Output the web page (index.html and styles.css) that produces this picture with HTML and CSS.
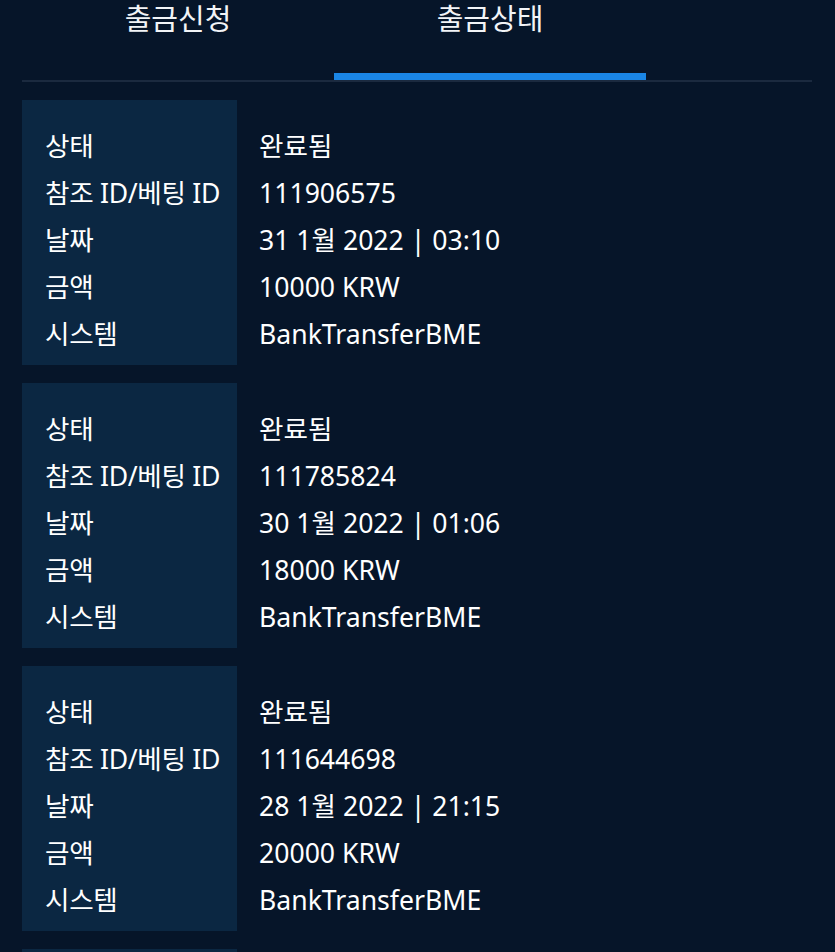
FILE: index.html
```html
<!DOCTYPE html>
<html lang="ko">
<head>
    <meta charset="UTF-8">
    <meta name="viewport" content="width=device-width, initial-scale=1.0">
    <title>출금상태</title>
    <link rel="stylesheet" href="styles.css">
</head>
<body>
    <div class="page">
        <div class="tabs">
            <div class="tab">출금신청</div>
            <div class="tab active">출금상태</div>
        </div>

        <div class="card">
            <div class="labels">
                <div class="row">상태</div>
                <div class="row">참조 ID/베팅 ID</div>
                <div class="row">날짜</div>
                <div class="row">금액</div>
                <div class="row">시스템</div>
            </div>
            <div class="values">
                <div class="row">완료됨</div>
                <div class="row">111906575</div>
                <div class="row">31 1월 2022 | 03:10</div>
                <div class="row">10000 KRW</div>
                <div class="row">BankTransferBME</div>
            </div>
        </div>

        <div class="card">
            <div class="labels">
                <div class="row">상태</div>
                <div class="row">참조 ID/베팅 ID</div>
                <div class="row">날짜</div>
                <div class="row">금액</div>
                <div class="row">시스템</div>
            </div>
            <div class="values">
                <div class="row">완료됨</div>
                <div class="row">111785824</div>
                <div class="row">30 1월 2022 | 01:06</div>
                <div class="row">18000 KRW</div>
                <div class="row">BankTransferBME</div>
            </div>
        </div>

        <div class="card">
            <div class="labels">
                <div class="row">상태</div>
                <div class="row">참조 ID/베팅 ID</div>
                <div class="row">날짜</div>
                <div class="row">금액</div>
                <div class="row">시스템</div>
            </div>
            <div class="values">
                <div class="row">완료됨</div>
                <div class="row">111644698</div>
                <div class="row">28 1월 2022 | 21:15</div>
                <div class="row">20000 KRW</div>
                <div class="row">BankTransferBME</div>
            </div>
        </div>

        <!-- next card, only its top edge is in view -->
        <div class="card card-stub">
            <div class="labels"></div>
            <div class="values"></div>
        </div>
    </div>
</body>
</html>
```

FILE: styles.css
```css
html, body {
    margin: 0;
    background-color: #061529;
    color: #ffffff;
    font-family: "Noto Sans", "Noto Sans CJK KR", sans-serif;
    overflow: hidden;
}
.page {
    padding: 0 23px 0 22px;
}
.tabs {
    display: flex;
    border-bottom: 2px solid #1b2a3f;
}
.tab {
    box-sizing: border-box;
    width: 312px;
    height: 80px;
    padding-top: 1px;
    text-align: center;
    font-family: "Noto Sans CJK KR", sans-serif;
    font-size: 29px;
    line-height: 32px;
    color: #f2f4f7;
}
.tab.active {
    border-bottom: 7px solid #1a86e6;
}
.card {
    display: flex;
    height: 265px;
    margin-top: 18px;
}
.card-stub {
    height: 3px;
}
.labels {
    box-sizing: border-box;
    width: 215px;
    padding: 23px 0 0 23px;
    background-color: #0b2742;
}
.labels .row {
    letter-spacing: -0.3px;
}
.values {
    padding: 23px 0 0 22px;
}
.row {
    height: 47px;
    line-height: 47px;
    font-size: 26.6px;
    white-space: nowrap;
}
```
